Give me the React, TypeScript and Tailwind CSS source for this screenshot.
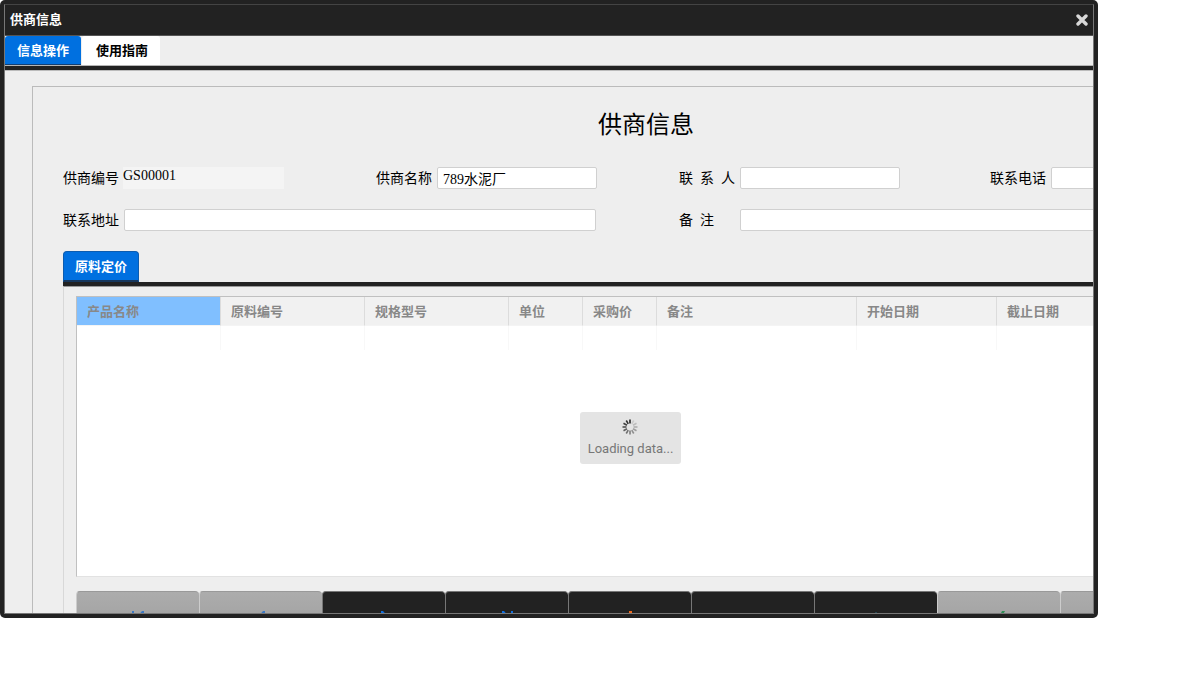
import { ReactNode } from "react";

const FIELD = "h-[22px] rounded-[2px] border border-[#d0d0d0] bg-white px-[5px] leading-5 outline-none";

const COLUMNS = [
  { label: "产品名称", width: "w-[144px]" },
  { label: "原料编号", width: "w-[144px]" },
  { label: "规格型号", width: "w-[144px]" },
  { label: "单位", width: "w-[74px]" },
  { label: "采购价", width: "w-[74px]" },
  { label: "备注", width: "w-[200px]" },
  { label: "开始日期", width: "w-[140px]" },
  { label: "截止日期", width: "w-auto" },
];

const ACTIONS: { label: string; disabled?: boolean; color: string; icon: ReactNode }[] = [
  { label: "首条", disabled: true, color: "text-[#3a78c4]", icon: <path d="M2 0h2v12H2zM14 0v12L7 6L12 0z" /> },
  { label: "上一条", disabled: true, color: "text-[#3a78c4]", icon: <path d="M12 0v12L5 6L10 0z" /> },
  { label: "下一条", color: "text-[#0f6fe0]", icon: <path d="M5 0h2l5 6-7 6z" /> },
  { label: "末条", color: "text-[#0f6fe0]", icon: <path d="M3 0h2l5 6-7 6zM12 0h2v12h-2z" /> },
  { label: "新增", color: "text-[#f26a1b]", icon: <path d="M7 0h3v5h5v3h-5v5H7V8H2V5h5z" /> },
  { label: "删除", color: "text-[#f26a1b]", icon: <path d="M2 6h13v3H2z" /> },
  { label: "编辑", color: "text-[#2c7f9e]", icon: <path d="M8 1l6 8H2zM2 12h12v2H2z" /> },
  { label: "保存", disabled: true, color: "text-[#2f8f57]", icon: <path d="M11 0h3L7 13 2 8l2-2 3 2z" /> },
  { label: "取消", disabled: true, color: "text-[#b04a3a]", icon: <path d="M2 3l2-2 4 4 4-4 2 2-4 4 4 4-2 2-4-4-4 4-2-2 4-4z" /> },
];

function Field({ id, label, className, value }: { id: string; label: string; className: string; value?: string }) {
  return (
    <div className="flex items-center">
      <label htmlFor={id} className="w-[61px] shrink-0 pt-[2px] leading-5 whitespace-nowrap">{label}</label>
      <input id={id} type="text" defaultValue={value} className={`${FIELD} ${className}`} />
    </div>
  );
}

function Spinner() {
  return (
    <svg viewBox="0 0 16 16" className="h-4 w-4" stroke="#222" strokeWidth="1.6">
      {Array.from({ length: 12 }, (_, i) => (
        <line key={i} x1="8" y1="0.5" x2="8" y2="4.5" opacity={1 - i * 0.08} transform={`rotate(${-i * 30} 8 8)`} />
      ))}
    </svg>
  );
}

function PriceGrid() {
  return (
    <div className="relative h-[281px] border border-t-[#c0c0c0] border-r-[#c0c0c0] border-b-[#e2e2e2] border-l-[#c0c0c0] bg-white">
      <table className="w-full table-fixed border-separate border-spacing-0 text-[13px]">
        <thead>
          <tr>
            {COLUMNS.map((c, i) => (
              <th
                key={c.label}
                scope="col"
                className={`${c.width} h-[29px] border-r border-b border-r-[#dcdcdc] border-b-[#f4f4f4] px-[10px] pt-[2px] pb-0 text-left font-bold text-[#888] ${i === 0 ? "bg-[#80bfff]" : "bg-[#f1f1f1]"}`}
              >
                {c.label}
              </th>
            ))}
          </tr>
        </thead>
        <tbody>
          <tr>
            {COLUMNS.map((c) => (
              <td key={c.label} className="h-6 border-r border-[#f8f8f8] p-0" />
            ))}
          </tr>
        </tbody>
      </table>
      <div className="absolute inset-0 flex items-center justify-center pt-[2px]">
        <div role="status" className="flex h-[52px] flex-col items-center rounded-[3px] bg-[#e4e4e4] px-2 pt-[7px] font-[Roboto,sans-serif] text-[13px] text-[#777]">
          <Spinner />
          <span className="mt-1 leading-5">Loading data...</span>
        </div>
      </div>
    </div>
  );
}

function SupplierForm() {
  return (
    <form className="w-[1228px] border border-[#bbb] pb-8 pl-[30px]">
      <h1 className="mt-5 pr-[30px] text-center text-[24px] leading-9 text-black">供商信息</h1>

      <div className="mt-6 grid grid-cols-[313px_303px_311px_1fr] gap-y-5 font-['Liberation_Serif','Noto_Sans_CJK_SC',serif] text-[14px] text-black">
        <div className="flex items-center">
          <label htmlFor="code" className="w-[60px] shrink-0 pt-[2px] leading-5">供商编号</label>
          <input id="code" type="text" readOnly defaultValue="GS00001" className="h-[22px] w-[161px] bg-[#f4f4f4] pb-1 outline-none" />
        </div>
        <Field id="name" label="供商名称" value="789水泥厂" className="w-40" />
        <Field id="contact" label={"联\u00a0\u00a0系\u00a0\u00a0人"} className="w-40" />
        <Field id="phone" label="联系电话" className="w-40" />
        <div className="col-span-2">
          <Field id="address" label="联系地址" className="w-[472px]" />
        </div>
        <div className="col-span-2">
          <Field id="remark" label={"备\u00a0\u00a0注"} className="w-[472px]" />
        </div>
      </div>

      <div className="mt-5 w-[1134px]">
        <div role="tablist" className="border-b-4 border-[#222]">
          <button type="button" role="tab" aria-selected="true" className="block h-[31px] rounded-t-[4px] border border-b-2 border-[#0b5cb0] border-b-[#17375c] bg-[#0070e0] px-[11px] pt-[2px] text-[13px] font-bold text-white">
            原料定价
          </button>
        </div>
        <div className="border-t border-l border-t-[#999] border-l-[#d8d8d8] px-3 pt-[9px]">
          <PriceGrid />
          <div className="mt-[14px] flex">
            {ACTIONS.map((a) => (
              <button
                key={a.label}
                type="button"
                aria-label={a.label}
                disabled={a.disabled}
                className={`flex h-[54px] w-[123px] shrink-0 justify-center rounded-t-[4px] border-t border-l pt-[19px] ${a.disabled ? "border-t-[#999] border-l-[#ccc] bg-linear-to-b from-[#acacac] to-[#9c9c9c]" : "border-[#777] bg-[#222]"}`}
              >
                <svg viewBox="0 0 16 16" className={`h-4 w-4 ${a.color}`} fill="currentColor">{a.icon}</svg>
              </button>
            ))}
          </div>
        </div>
      </div>
    </form>
  );
}

export default function App() {
  return (
    <div className="h-screen bg-white pr-24 pb-[69px] font-['Liberation_Sans','Noto_Sans_CJK_SC',sans-serif]">
      <section className="h-full rounded-[5px] bg-[#222] p-1">
        <div className="flex h-full flex-col overflow-hidden border border-[#777] border-t-[#444] bg-[#eee]">
          <header className="flex h-[31px] shrink-0 items-center justify-between border-b border-[#555] bg-[#222] px-[5px]">
            <h2 className="text-[13px] font-bold text-white">供商信息</h2>
            <button type="button" aria-label="关闭" className="text-[#d8d8d8]">
              <svg viewBox="0 0 12 12" className="h-3 w-3" stroke="currentColor" strokeWidth="3.4" strokeLinecap="round">
                <path d="M2 2l8 8M10 2l-8 8" />
              </svg>
            </button>
          </header>

          <div role="tablist" className="flex h-[30px] shrink-0 gap-px border-b border-[#b5b5b5] text-[13px] font-bold">
            <button type="button" role="tab" aria-selected="true" className="rounded-t-[3px] border-b border-[#123f73] bg-[#0070e0] px-3 pt-[2px] text-white">
              信息操作
            </button>
            <button type="button" role="tab" aria-selected="false" className="rounded-t-[3px] bg-white pt-px pr-3 pl-[14px] text-black">
              使用指南
            </button>
          </div>
          <div className="h-[5px] shrink-0 border-b border-[#bbb] bg-[#222]" />

          <main className="min-h-0 flex-1 overflow-hidden pt-[15px] pl-[27px]">
            <SupplierForm />
          </main>
        </div>
      </section>
    </div>
  );
}
